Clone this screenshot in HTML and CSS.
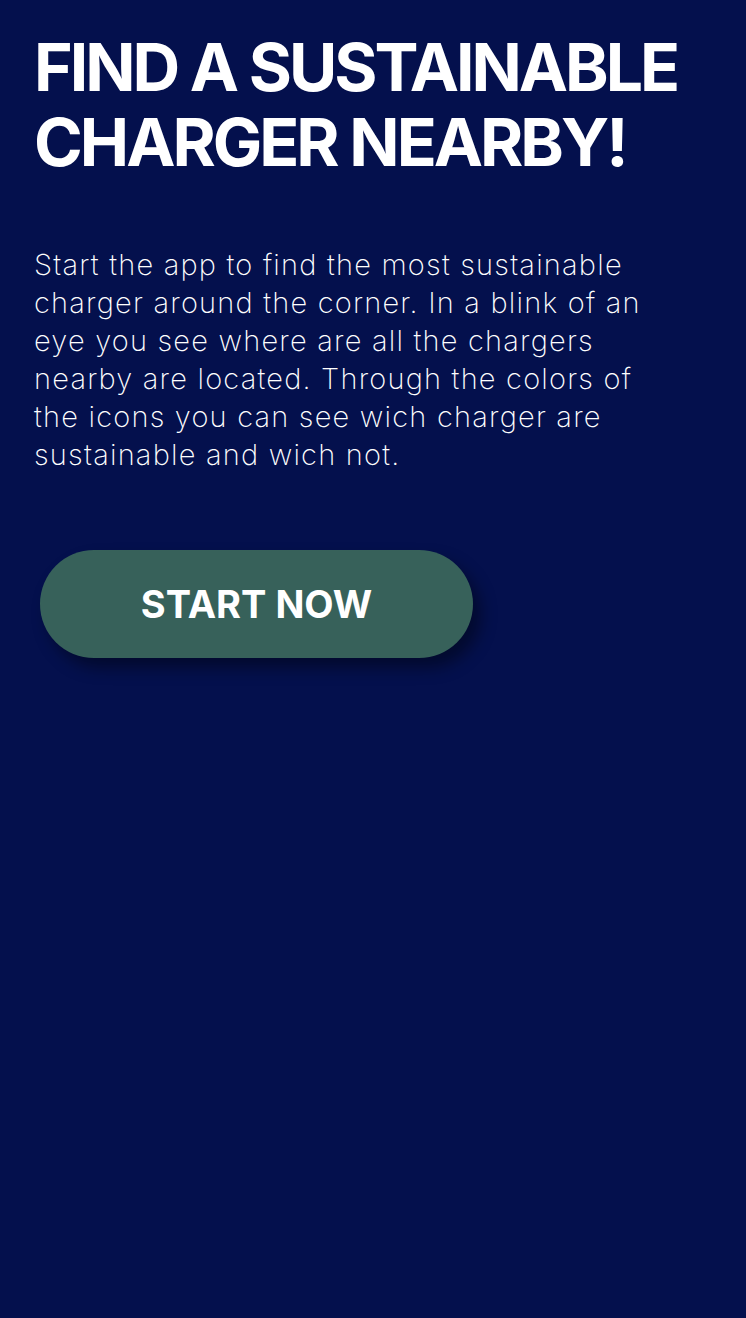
FILE: index.html
```html
<!DOCTYPE html>
<html lang="en">
<head>
<meta charset="utf-8">
<title>Find a sustainable charger</title>
<link rel="stylesheet" href="styles.css">
</head>
<body>
<main class="page">
  <h1 class="title">FIND A SUSTAINABLE<br>CHARGER NEARBY!</h1>
  <p class="intro">Start the app to find the most sustainable charger around the corner. In a blink of an eye you see where are all the chargers nearby are located. Through the colors of the icons you can see wich charger are sustainable and wich not.</p>
  <button class="cta" type="button">START NOW</button>
</main>
</body>
</html>
```
FILE: styles.css
```css
html, body {
  margin: 0;
  padding: 0;
  background: #04104d;
}
body {
  min-height: 1318px;
  color: #ffffff;
  font-family: Inter, Roboto, sans-serif;
}
.page {
  display: flex;
  flex-direction: column;
  align-items: flex-start;
  padding: 30px 34px 0 34px;
}
.title {
  margin: 0;
  font-family: Inter, Roboto, sans-serif;
  font-weight: 700;
  font-size: 66px;
  line-height: 75px;
  letter-spacing: -3px;
}
.intro {
  margin: 66px 0 0 0;
  max-width: 615px;
  font-family: Inter, Roboto, sans-serif;
  font-weight: 200;
  font-size: 29px;
  line-height: 38px;
  letter-spacing: 1.2px;
}
.cta {
  margin: 76px 0 0 6px;
  width: 433px;
  height: 108px;
  border: none;
  border-radius: 54px;
  background: #37615a;
  color: #ffffff;
  font-family: Inter, Roboto, sans-serif;
  font-weight: 700;
  font-size: 38px;
  box-shadow: 8px 10px 16px rgba(0, 0, 0, 0.4);
}
```
